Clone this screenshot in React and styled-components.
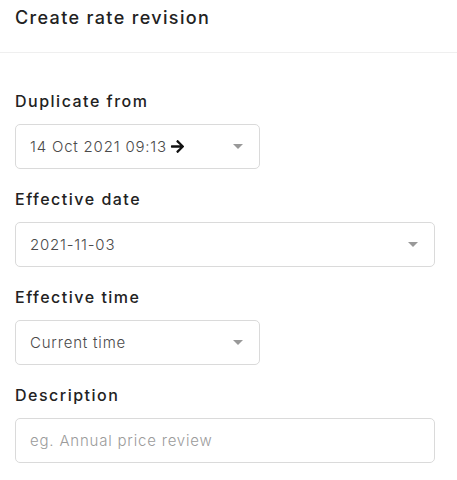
import React from 'react';
import styled, { createGlobalStyle } from 'styled-components';
import { FaArrowRight } from 'react-icons/fa';

const GlobalStyle = createGlobalStyle`
  body {
    margin: 0;
    background: #fff;
    font-family: Inter, "Open Sans", sans-serif;
    color: #222;
  }
`;

const Header = styled.div`
  height: 53px;
  box-sizing: border-box;
  padding: 6px 15px 0;
  border-bottom: 1px solid #efefef;
`;

const Title = styled.h1`
  margin: 0;
  font-size: 18px;
  font-weight: 500;
  line-height: 24px;
  letter-spacing: 1.35px;
  color: #222;
`;

const Form = styled.div`
  padding: 37px 15px 0 15px;
  display: flex;
  flex-direction: column;
  gap: 19px;
`;

const Field = styled.div`
  display: flex;
  flex-direction: column;
  gap: 12px;
`;

const Label = styled.label`
  font-size: 16px;
  font-weight: 500;
  line-height: 22px;
  letter-spacing: 1.5px;
  color: #222;
`;

const Box = styled.div`
  box-sizing: border-box;
  width: ${p => (p.$wide ? '420px' : '245px')};
  height: 45px;
  border: 1px solid #dadada;
  border-radius: 5px;
  display: flex;
  align-items: center;
  padding: 0 14px;
  font-size: 15px;
  font-weight: 300;
  letter-spacing: 0.8px;
  color: ${p => (p.$placeholder ? '#9b9b9b' : '#4a4a4a')};
`;

const Value = styled.span`
  flex: 1;
  display: flex;
  align-items: center;
  gap: 3px;
`;

const Caret = styled.span`
  width: 0;
  height: 0;
  border-left: 5px solid transparent;
  border-right: 5px solid transparent;
  border-top: 5px solid #999;
  margin-right: 2px;
`;

const Select = ({ wide, children }) => (
  <Box $wide={wide}>
    <Value>{children}</Value>
    <Caret />
  </Box>
);

export default function App() {
  return (
    <>
      <GlobalStyle />
      <Header>
        <Title>Create rate revision</Title>
      </Header>
      <Form>
        <Field>
          <Label>Duplicate from</Label>
          <Select>
            14 Oct 2021 09:13 <FaArrowRight size={15} color="#111" />
          </Select>
        </Field>
        <Field>
          <Label>Effective date</Label>
          <Select wide>2021-11-03</Select>
        </Field>
        <Field>
          <Label>Effective time</Label>
          <Select>Current time</Select>
        </Field>
        <Field>
          <Label>Description</Label>
          <Box $wide $placeholder>eg. Annual price review</Box>
        </Field>
      </Form>
    </>
  );
}
